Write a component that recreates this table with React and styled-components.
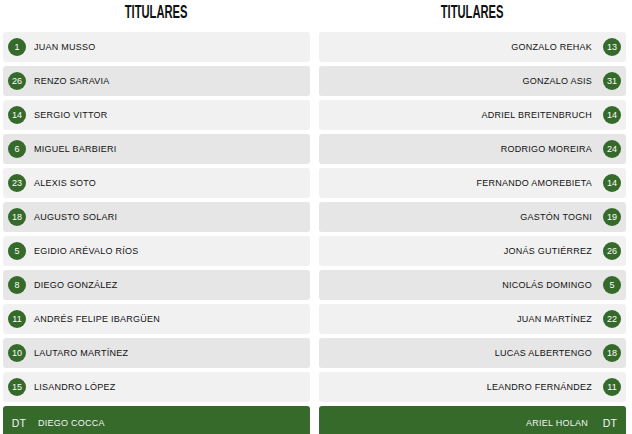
import React from 'react';
import styled, { createGlobalStyle } from 'styled-components';

const GlobalStyle = createGlobalStyle`
  html, body {
    margin: 0;
    padding: 0;
    background: #fff;
  }
  body {
    font-family: "Liberation Sans", Arial, sans-serif;
  }
`;

const home = {
  coach: 'DIEGO COCCA',
  players: [
    [1, 'JUAN MUSSO'],
    [26, 'RENZO SARAVIA'],
    [14, 'SERGIO VITTOR'],
    [6, 'MIGUEL BARBIERI'],
    [23, 'ALEXIS SOTO'],
    [18, 'AUGUSTO SOLARI'],
    [5, 'EGIDIO ARÉVALO RÍOS'],
    [8, 'DIEGO GONZÁLEZ'],
    [11, 'ANDRÉS FELIPE IBARGÜEN'],
    [10, 'LAUTARO MARTÍNEZ'],
    [15, 'LISANDRO LÓPEZ'],
  ],
};

const away = {
  coach: 'ARIEL HOLAN',
  players: [
    [13, 'GONZALO REHAK'],
    [31, 'GONZALO ASIS'],
    [14, 'ADRIEL BREITENBRUCH'],
    [24, 'RODRIGO MOREIRA'],
    [14, 'FERNANDO AMOREBIETA'],
    [19, 'GASTÓN TOGNI'],
    [26, 'JONÁS GUTIÉRREZ'],
    [5, 'NICOLÁS DOMINGO'],
    [22, 'JUAN MARTÍNEZ'],
    [18, 'LUCAS ALBERTENGO'],
    [11, 'LEANDRO FERNÁNDEZ'],
  ],
};

const Page = styled.div`
  display: grid;
  grid-template-columns: 307px 307px;
  column-gap: 9px;
  padding-left: 3px;
  width: 632px;
  height: 434px;
  overflow: hidden;
  box-sizing: border-box;
`;

const Column = styled.section`
  display: flex;
  flex-direction: column;
`;

const Title = styled.h2`
  margin: 0;
  height: 32px;
  display: flex;
  justify-content: center;
  align-items: flex-start;
  span {
    display: inline-block;
    margin-top: 2px;
    font-family: "Liberation Sans", Arial, sans-serif;
    font-weight: 700;
    font-size: 17.5px;
    line-height: 20px;
    color: #111;
    transform: scaleX(0.64);
  }
`;

const List = styled.ul`
  list-style: none;
  margin: 0;
  padding: 0;
  display: flex;
  flex-direction: column;
  gap: 4px;
`;

const Row = styled.li`
  height: 30px;
  border-radius: 3px;
  display: flex;
  align-items: center;
  flex-direction: ${(p) => (p.$right ? 'row-reverse' : 'row')};
  padding: 0 5px;
  background: ${(p) => (p.$coach ? '#356a2b' : p.$dark ? '#e6e6e6' : '#f1f1f1')};
  color: ${(p) => (p.$coach ? '#f4f4f4' : '#111')};
  font-size: 9px;
  letter-spacing: 0.25px;
`;

const Number = styled.span`
  flex: none;
  width: 18px;
  height: 18px;
  border-radius: 50%;
  background: #356a2b;
  color: #fff;
  font-size: 9px;
  letter-spacing: 0;
  display: flex;
  align-items: center;
  justify-content: center;
`;

const Name = styled.span`
  margin: ${(p) => (p.$right ? '0 11px 0 0' : '0 0 0 8px')};
  padding-top: ${(p) => (p.$coach ? '3px' : '0')};
`;

const Tag = styled.span`
  flex: none;
  width: 22px;
  text-align: center;
  font-size: 10.5px;
  padding-top: 3px;
`;

const Side = ({ team, right }) => (
  <Column>
    <Title>
      <span>TITULARES</span>
    </Title>
    <List>
      {team.players.map(([n, name], i) => (
        <Row key={name} $right={right} $dark={i % 2 === 1}>
          <Number>{n}</Number>
          <Name $right={right}>{name}</Name>
        </Row>
      ))}
      <Row $right={right} $coach>
        <Tag>DT</Tag>
        <Name $right={right} $coach>{team.coach}</Name>
      </Row>
    </List>
  </Column>
);

export default function App() {
  return (
    <>
      <GlobalStyle />
      <Page>
        <Side team={home} />
        <Side team={away} right />
      </Page>
    </>
  );
}
